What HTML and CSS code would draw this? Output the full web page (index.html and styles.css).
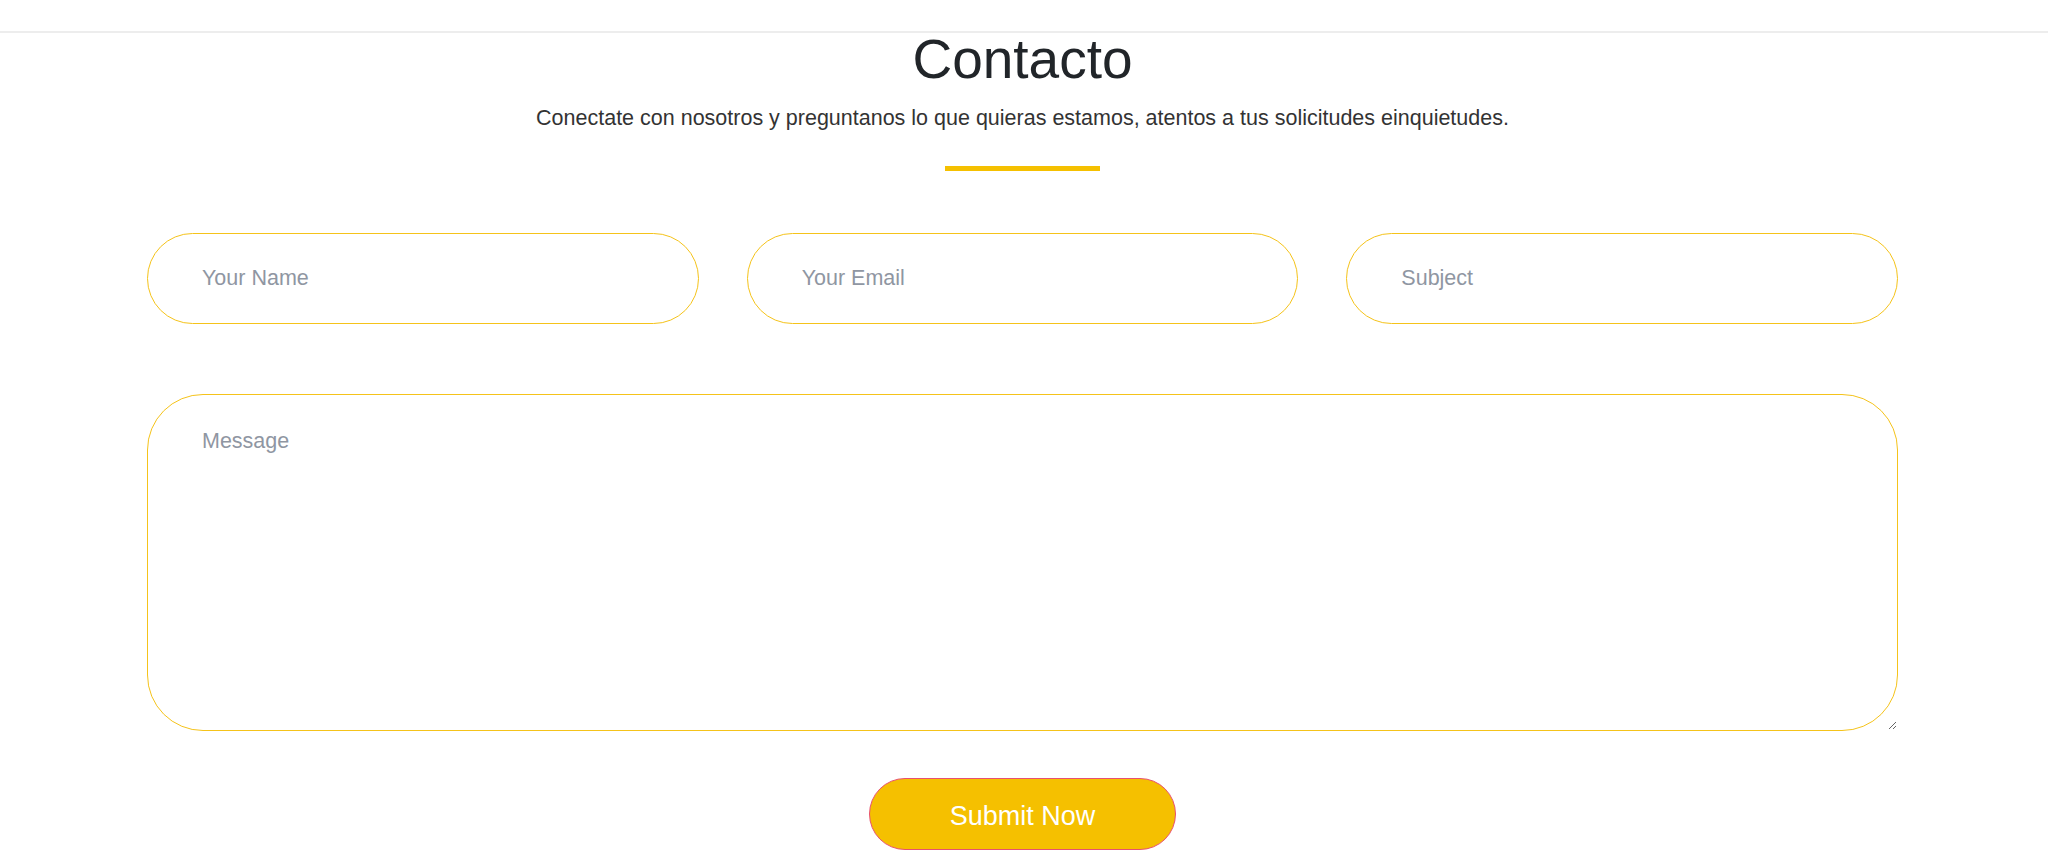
FILE: index.html
```html
<!DOCTYPE html>
<html lang="es">
<head>
<meta charset="utf-8">
<title>Contacto</title>
<link rel="stylesheet" href="styles.css">
</head>
<body>
<header class="topbar"></header>
<section class="contact">
  <h1 class="contact-title">Contacto</h1>
  <p class="contact-lead">Conectate con nosotros y preguntanos lo que quieras estamos, atentos a tus solicitudes einquietudes.</p>
  <div class="contact-rule"></div>
  <form class="contact-form">
    <div class="field-row">
      <input class="field" type="text" placeholder="Your Name">
      <input class="field" type="email" placeholder="Your Email">
      <input class="field" type="text" placeholder="Subject">
    </div>
    <textarea class="field field-message" placeholder="Message"></textarea>
    <div class="actions">
      <button class="submit" type="button">Submit Now</button>
    </div>
  </form>
</section>
</body>
</html>
```
FILE: styles.css
```css
* { box-sizing: border-box; }
html, body { margin: 0; padding: 0; background: #fff; }
body {
  font-family: "Liberation Sans", Arial, sans-serif;
  color: #333;
  overflow: hidden;
}
.topbar {
  height: 33px;
  border-bottom: 2px solid #ededed;
  background: #fff;
}
.contact {
  width: 1751px;
  margin: 0 0 0 calc(50% - 877px);
  display: flex;
  flex-direction: column;
  align-items: center;
}
.contact-title {
  margin: -1px 0 0;
  font-size: 55px;
  line-height: 54px;
  font-weight: 400;
  color: #212529;
}
.contact-lead {
  margin: 17px 0 0;
  font-size: 21.5px;
  line-height: 30px;
  color: #333;
}
.contact-rule {
  margin-top: 33px;
  width: 155px;
  height: 5px;
  background: #f5c000;
}
.contact-form {
  width: 100%;
  margin-top: 62px;
  display: flex;
  flex-direction: column;
}
.field-row {
  display: grid;
  grid-template-columns: repeat(3, 1fr);
  gap: 48px;
}
.field {
  font-family: "Liberation Sans", Arial, sans-serif;
  font-size: 21.5px;
  color: #333;
  border: 1px solid #f5c31a;
  background: #fff;
  outline: none;
}
.field::placeholder { color: #8f96a2; opacity: 1; }
.field-row .field {
  height: 91px;
  border-radius: 46px;
  padding: 0 20px 0 54px;
}
.field-message {
  display: block;
  margin-top: 70px;
  height: 337px;
  width: 100%;
  border-radius: 56px;
  padding: 34px 54px;
  resize: both;
}
.actions {
  display: flex;
  justify-content: center;
  margin-top: 47px;
}
.submit {
  width: 307px;
  height: 72px;
  border-radius: 36px;
  border: 1px solid #e8506f;
  background: #f5c000;
  color: #fff;
  font-family: "Liberation Sans", Arial, sans-serif;
  font-size: 27px;
  padding: 4px 0 0;
  cursor: pointer;
}
```
